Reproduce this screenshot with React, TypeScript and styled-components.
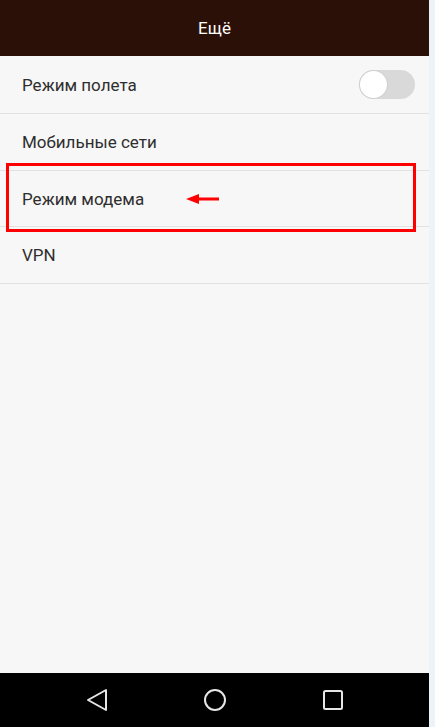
import React from "react";
import styled, { createGlobalStyle } from "styled-components";

const Global = createGlobalStyle`
  html, body { margin: 0; padding: 0; background: #eef3fa; }
  body { font-family: Roboto, "Noto Sans", sans-serif; }
  #root { width: 435px; height: 727px; }
`;

const Page = styled.div`
  display: flex;
  width: 435px;
  height: 727px;
  background: #eef3fa;
`;

const Phone = styled.div`
  width: 429px;
  height: 727px;
  display: flex;
  flex-direction: column;
  background: #f7f7f7;
`;

const Header = styled.div`
  height: 56px;
  flex: 0 0 56px;
  background: #2a1006;
  color: #ffffff;
  display: flex;
  align-items: center;
  justify-content: center;
  font-size: 17px;
`;

const List = styled.div`
  flex: 1;
  display: flex;
  flex-direction: column;
`;

const Row = styled.div<{ $h: number }>`
  position: relative;
  height: ${(p) => p.$h}px;
  border-bottom: 1px solid #e2e2e2;
  display: flex;
  align-items: center;
  justify-content: space-between;
  padding: 0 14px 0 22px;
  color: #2e2e2e;
  font-size: 17px;
`;

const Toggle = styled.div`
  width: 56px;
  height: 29px;
  border-radius: 15px;
  background: #d9d9d9;
  display: flex;
  align-items: center;
  padding-left: 1px;
  box-sizing: border-box;
`;

const Knob = styled.div`
  width: 27px;
  height: 27px;
  border-radius: 50%;
  background: #ffffff;
  box-shadow: 0 0 0 1px #d0d0d0;
`;

const Highlight = styled.div`
  position: absolute;
  left: 6px;
  top: -8px;
  width: 410px;
  height: 69px;
  border: 3px solid #ff0000;
  box-sizing: border-box;
  pointer-events: none;
`;

const Arrow = styled.svg`
  position: absolute;
  left: 186px;
  top: 22px;
`;

const NavBar = styled.div`
  height: 54px;
  flex: 0 0 54px;
  background: #000000;
  display: grid;
  grid-template-columns: repeat(3, 118px);
  justify-content: center;
  align-items: center;
`;

const NavIcon = styled.svg`
  display: block;
  justify-self: center;
`;

export default function App() {
  return (
    <>
      <Global />
      <Page>
        <Phone>
          <Header>Ещё</Header>
          <List>
            <Row $h={57}>
              Режим полета
              <Toggle>
                <Knob />
              </Toggle>
            </Row>
            <Row $h={56}>Мобильные сети</Row>
            <Row $h={55}>
              Режим модема
              <Highlight />
              <Arrow width="34" height="12" viewBox="0 0 34 12">
                <polygon points="0,6 13,1 13,11" fill="#ff0000" />
                <rect x="12" y="4.5" width="21" height="3" fill="#ff0000" />
              </Arrow>
            </Row>
            <Row $h={56}>VPN</Row>
          </List>
          <NavBar>
            <NavIcon width="22" height="24" viewBox="0 0 22 24">
              <polygon
                points="2,12 20,2 20,22"
                fill="none"
                stroke="#e6e6e6"
                strokeWidth="2"
                strokeLinejoin="round"
              />
            </NavIcon>
            <NavIcon width="24" height="24" viewBox="0 0 24 24">
              <circle cx="12" cy="12" r="10" fill="none" stroke="#e6e6e6" strokeWidth="2" />
            </NavIcon>
            <NavIcon width="22" height="22" viewBox="0 0 22 22">
              <rect x="2" y="2" width="18" height="18" rx="1.5" fill="none" stroke="#e6e6e6" strokeWidth="2" />
            </NavIcon>
          </NavBar>
        </Phone>
      </Page>
    </>
  );
}
